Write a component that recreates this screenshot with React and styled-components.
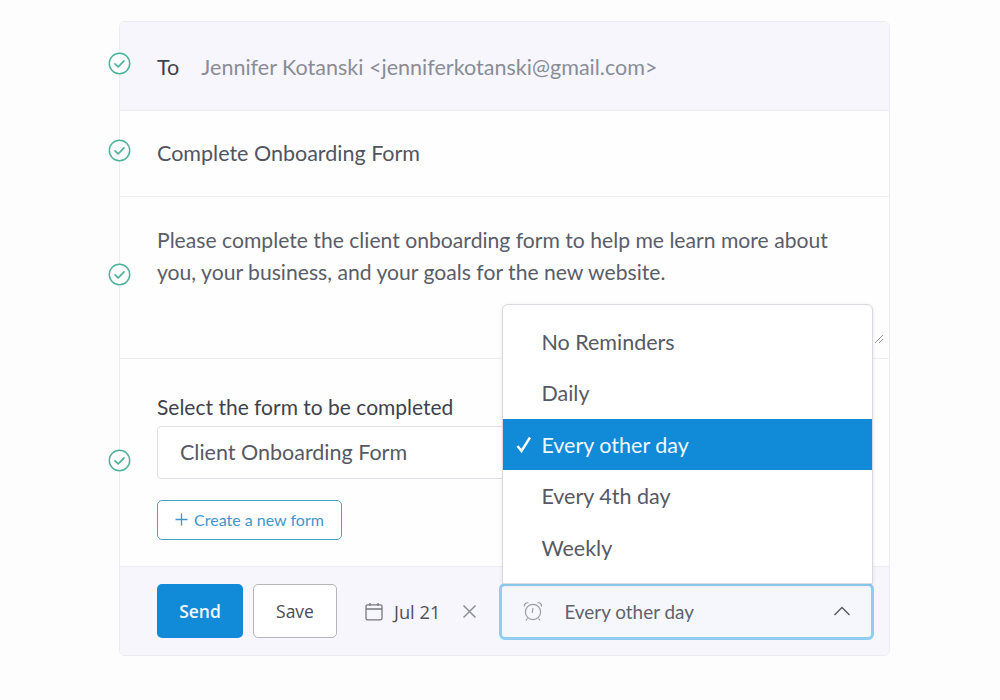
import React from "react";
import styled, { createGlobalStyle } from "styled-components";

const Global = createGlobalStyle`
  html, body { margin: 0; padding: 0; background: #fdfdfe; }
  body { font-family: "Lato", "Liberation Sans", sans-serif; color: #51545f; }
  * { box-sizing: border-box; }
`;

const Page = styled.div`
  width: 1000px;
  height: 700px;
  padding: 21px 0 0 119px;
  overflow: hidden;
`;

const Card = styled.div`
  width: 771px;
  height: 635px;
  background: #fff;
  border: 1px solid #ececf2;
  border-radius: 6px;
  display: flex;
  flex-direction: column;
`;

const Row = styled.div`
  position: relative;
  height: ${(p) => p.$h}px;
  padding: ${(p) => p.$pad || "0 37px"};
  background: ${(p) => p.$bg || "#fefeff"};
  border-bottom: 1px solid #ecedf2;
  font-size: 21.5px;
  display: ${(p) => (p.$center ? "flex" : "block")};
  align-items: center;
  gap: 22px;
`;

const ToRow = styled(Row)`
  border-radius: 6px 6px 0 0;
  font-size: 21.55px;
`;

const ToLabel = styled.span`
  color: #3f424c;
`;

const ToValue = styled.span`
  color: #8a8c96;
`;

const Body = styled.p`
  margin: 0;
  font-size: 21.15px;
  line-height: 32px;
  color: #5a5d69;
  width: 690px;
`;

const CheckWrap = styled.span`
  position: absolute;
  left: -12px;
  top: ${(p) => p.$top}px;
  width: 23px;
  height: 23px;
  display: flex;
`;

const Grip = styled.svg`
  position: absolute;
  right: 5px;
  bottom: 14px;
`;

const FieldLabel = styled.div`
  font-size: 21px;
  line-height: 24px;
  color: #3f424c;
  margin-top: -1px;
  margin-bottom: 7px;
`;

const FormSelect = styled.div`
  width: 600px;
  height: 53px;
  border: 1px solid #dfdfe6;
  border-radius: 4px;
  padding: 0 22px 1px;
  display: flex;
  align-items: center;
  font-size: 21.5px;
  color: #565964;
  background: #fff;
`;

const CreateButton = styled.div`
  margin-top: 21px;
  width: 185px;
  height: 40px;
  padding-bottom: 1px;
  border: 1px solid #4d9ec9;
  border-radius: 5px;
  display: flex;
  align-items: center;
  justify-content: center;
  gap: 6px;
  font-size: 16px;
  color: #3f95cf;
  background: #fff;
`;

const Footer = styled.div`
  flex: 1;
  background: #f6f6fc;
  border-radius: 0 0 6px 6px;
  display: flex;
  align-items: center;
  padding: 0 14px 0 37px;
`;

const Btn = styled.div`
  height: 54px;
  width: ${(p) => p.$w}px;
  border-radius: 5px;
  display: flex;
  align-items: center;
  justify-content: center;
  font-family: "Open Sans", "Noto Sans", sans-serif;
  font-size: 17.5px;
  ${(p) =>
    p.$primary
      ? "background:#118ad8;color:#eef7fd;font-weight:600;"
      : "background:#fff;color:#4a4c55;border:1px solid #b5b5bb;margin-left:10px;"}
`;

const DateBox = styled.div`
  display: flex;
  align-items: center;
  margin-left: 28px;
  font-family: "Open Sans", "Noto Sans", sans-serif;
  font-size: 18.3px;
  color: #4f515b;
  gap: 11px;
`;

const Clear = styled.svg`
  margin-left: 22px;
  margin-right: 22px;
`;

const Reminder = styled.div`
  position: relative;
  width: 375px;
  height: 57px;
  border: 3px solid #8fcdf1;
  border-radius: 6px;
  display: flex;
  align-items: center;
  padding: 0 20px 0 21px;
  font-size: 18.9px;
  color: #5f626d;
  background: #f6f7fc;
`;

const ReminderText = styled.span`
  margin-left: 21px;
  flex: 1;
`;

const Menu = styled.div`
  position: absolute;
  left: 0;
  bottom: 53px;
  width: 371px;
  height: 280px;
  padding-top: 11px;
  background: #fff;
  border: 1px solid #d8d8de;
  border-radius: 6px 6px 0 0;
  box-shadow: 0 1px 4px rgba(0, 0, 0, 0.08);
`;

const MenuItem = styled.div`
  position: relative;
  height: 51.5px;
  padding: 1px 0 0 38px;
  display: flex;
  align-items: center;
  font-size: 21.5px;
  color: ${(p) => (p.$active ? "#f2f9fe" : "#565964")};
  background: ${(p) => (p.$active ? "#118ad8" : "transparent")};
`;

const Tick = styled.svg`
  position: absolute;
  left: 13px;
  top: 17px;
`;

const Check = ({ top }) => (
  <CheckWrap $top={top}>
    <svg width="23" height="23" viewBox="0 0 23 23" fill="none">
      <circle cx="11.5" cy="11.5" r="10.2" fill="#fff" stroke="#4fb39b" strokeWidth="1.5" />
      <path d="M7 11.8l3.2 3 5.8-6" stroke="#4fb39b" strokeWidth="1.7" strokeLinecap="round" strokeLinejoin="round" />
    </svg>
  </CheckWrap>
);

const options = ["No Reminders", "Daily", "Every other day", "Every 4th day", "Weekly"];

export default function App() {
  return (
    <>
      <Global />
      <Page>
        <Card>
          <ToRow $h={89} $pad="2px 37px 0" $bg="#f6f6fc" $center>
            <Check top={30} />
            <ToLabel>To</ToLabel>
            <ToValue>Jennifer Kotanski &lt;jenniferkotanski@gmail.com&gt;</ToValue>
          </ToRow>
          <Row $h={86} $pad="0 37px 2px" $center>
            <Check top={28} />
            Complete Onboarding Form
          </Row>
          <Row $h={162} $pad="27px 37px 0">
            <Check top={66} />
            <Body>
              Please complete the client onboarding form to help me learn more about you, your
              business, and your goals for the new website.
            </Body>
            <Grip width="10" height="10" viewBox="0 0 10 10" fill="none" stroke="#9a9aa2" strokeWidth="1">
              <path d="M1 9L9 1M5 9L9 5" />
            </Grip>
          </Row>
          <Row $h={208} $pad="37px 37px 0">
            <Check top={90} />
            <FieldLabel>Select the form to be completed</FieldLabel>
            <FormSelect>Client Onboarding Form</FormSelect>
            <CreateButton>
              <svg width="13" height="13" viewBox="0 0 13 13" stroke="#3f95cf" strokeWidth="1.3">
                <path d="M6.5 0.5v12M0.5 6.5h12" />
              </svg>
              Create a new form
            </CreateButton>
          </Row>
          <Footer>
            <Btn $primary $w={86}>Send</Btn>
            <Btn $w={84}>Save</Btn>
            <DateBox>
              <svg width="18" height="19" viewBox="0 0 18 19" fill="none" stroke="#77787f" strokeWidth="1.3">
                <rect x="1" y="2.8" width="16" height="15" rx="1.5" />
                <path d="M1 7h16M5 1v3M13 1v3" />
              </svg>
              Jul 21
            </DateBox>
            <Clear width="15" height="15" viewBox="0 0 15 15" stroke="#8d8e95" strokeWidth="1.5">
              <path d="M1.5 1.5l12 12M13.5 1.5l-12 12" />
            </Clear>
            <Reminder>
              <svg width="20" height="20" viewBox="0 0 20 20" fill="none" stroke="#9b9ca3" strokeWidth="1.2">
                <circle cx="10" cy="11" r="7.6" />
                <path d="M10 7l-.8 5M1.5 5.5a3 3 0 0 1 4-3.5M18.5 5.5a3 3 0 0 0-4-3.5M4.5 17.5l-1.5 2M15.5 17.5l1.5 2" />
              </svg>
              <ReminderText>Every other day</ReminderText>
              <svg width="18" height="10" viewBox="0 0 18 10" fill="none" stroke="#55565e" strokeWidth="1.4">
                <path d="M1.5 9L9 1.5 16.5 9" />
              </svg>
              <Menu>
                {options.map((o) => (
                  <MenuItem key={o} $active={o === "Every other day"}>
                    {o === "Every other day" && (
                      <Tick width="16" height="17" viewBox="0 0 16 17" fill="none" stroke="#fff" strokeWidth="2.4">
                        <path d="M1.5 10l4 5L14 1.5" />
                      </Tick>
                    )}
                    {o}
                  </MenuItem>
                ))}
              </Menu>
            </Reminder>
          </Footer>
        </Card>
      </Page>
    </>
  );
}
